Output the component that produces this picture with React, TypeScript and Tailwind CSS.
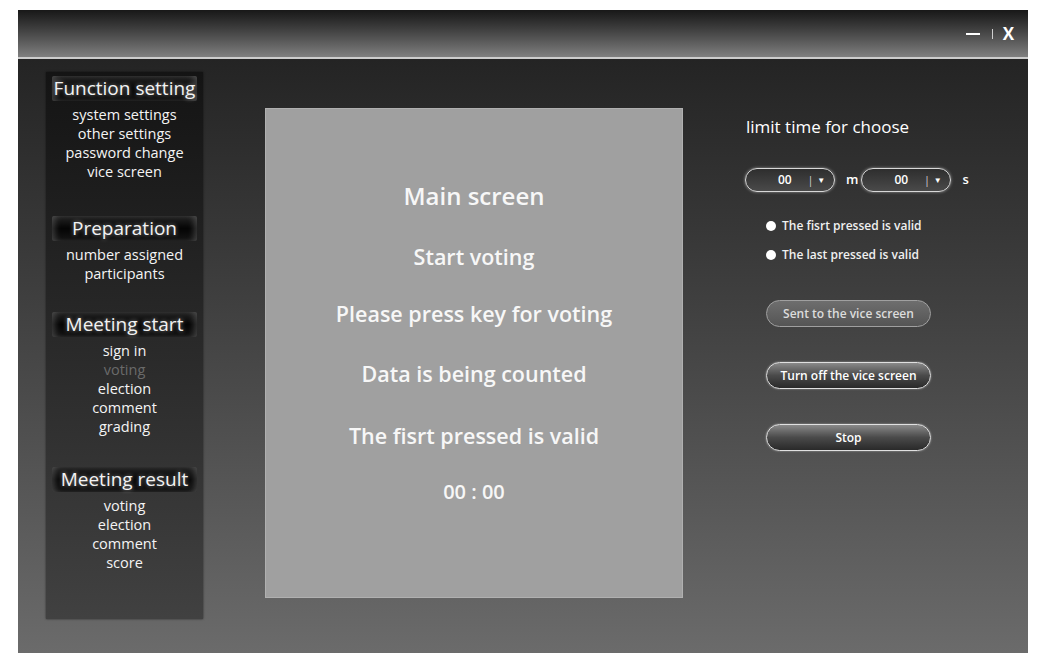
import React from 'react';

const FONT = "font-['Open_Sans','Noto_Sans',sans-serif]";

const SECTIONS: { title: string; items: { label: string; dim?: boolean }[]; gap: string }[] = [
  {
    title: 'Function setting',
    items: [{ label: 'system settings' }, { label: 'other settings' }, { label: 'password change' }, { label: 'vice screen' }],
    gap: 'mt-[4px]',
  },
  {
    title: 'Preparation',
    items: [{ label: 'number assigned' }, { label: 'participants' }],
    gap: 'mt-[35px]',
  },
  {
    title: 'Meeting start',
    items: [{ label: 'sign in' }, { label: 'voting', dim: true }, { label: 'election' }, { label: 'comment' }, { label: 'grading' }],
    gap: 'mt-[29px]',
  },
  {
    title: 'Meeting result',
    items: [{ label: 'voting' }, { label: 'election' }, { label: 'comment' }, { label: 'score' }],
    gap: 'mt-[31px]',
  },
];

const SCREEN_LINES = [
  { text: 'Main screen', cls: 'text-[24px] h-[30px]' },
  { text: 'Start voting', cls: 'text-[21.5px] h-[28px] mt-[31px]' },
  { text: 'Please press key for voting', cls: 'text-[21.5px] h-[28px] mt-[29px]' },
  { text: 'Data is being counted', cls: 'text-[21.5px] h-[28px] mt-[32px]' },
  { text: 'The fisrt pressed is valid', cls: 'text-[21.5px] h-[28px] mt-[34px]' },
  { text: '00 : 00', cls: 'text-[20px] h-[28px] mt-[28px]' },
];

function Sidebar() {
  return (
    <div className="w-[157px] h-[547px] mt-[13px] bg-linear-to-b from-[#141414] to-[#414141] shadow-[0_0_2px_rgba(0,0,0,0.6)] px-[6px] flex flex-col">
      {SECTIONS.map((s) => (
        <div key={s.title} className={s.gap}>
          <div className="h-[25px] rounded-[2px] bg-linear-to-b from-[#262626] via-[#050505] to-[#161616] shadow-[inset_6px_0_6px_-3px_rgba(120,120,120,0.45),inset_-6px_0_6px_-3px_rgba(120,120,120,0.45)] flex items-center justify-center">
            <span className="text-[19px] leading-none text-[#f2f2f2] [text-shadow:0_0_4px_rgba(255,255,255,0.55)] whitespace-nowrap">{s.title}</span>
          </div>
          <div className="mt-[4px] flex flex-col items-center">
            {s.items.map((it, i) => (
              <div
                key={i}
                className={`text-[14.5px] leading-[19px] whitespace-nowrap ${it.dim ? 'text-[#6a6a6a]' : 'text-[#f4f4f4]'}`}
              >
                {it.label}
              </div>
            ))}
          </div>
        </div>
      ))}
    </div>
  );
}

function PillSelect() {
  return (
    <div className="w-[90px] h-[24px] rounded-full border border-[#d8d8d8] bg-linear-to-b from-[#2e2e2e] to-[#4a4a4a] shadow-[0_0_3px_rgba(255,255,255,0.5)] flex items-center">
      <span className="ml-[32px] text-[12px] font-semibold text-white">00</span>
      <span className="ml-[16px] text-[10px] text-[#ddd]">|</span>
      <span className="ml-[4px] text-[8px] text-white">▼</span>
    </div>
  );
}

function GlossButton({ label, light }: { label: string; light?: boolean }) {
  return (
    <button
      className={`w-[165px] h-[27px] rounded-full border text-[12px] font-semibold ${
        light
          ? 'border-[#a0a0a0] bg-linear-to-b from-[#6e6e6e] to-[#555555] text-[#dcdcdc]'
          : 'border-[#e0e0e0] bg-linear-to-b from-[#8a8a8a] via-[#4a4a4a] to-[#2a2a2a] text-white shadow-[0_0_2px_rgba(255,255,255,0.5)]'
      }`}
    >
      {label}
    </button>
  );
}

function Radio({ label }: { label: string }) {
  return (
    <div className="flex items-center gap-[6px] h-[14px]">
      <span className="w-[10px] h-[10px] rounded-full bg-white" />
      <span className="text-[12px] font-semibold text-[#f0f0f0]">{label}</span>
    </div>
  );
}

export default function App() {
  return (
    <div className={`w-[1038px] h-[666px] bg-white pt-[10px] pl-[18px] ${FONT}`}>
      <div className="w-[1010px] h-[643px] flex flex-col overflow-hidden">
        {/* title bar */}
        <div className="h-[47px] bg-linear-to-b from-[#181818] to-[#808080] flex items-center justify-end pr-[14px] text-white">
          <span className="w-[14px] h-[2px] bg-white mt-[1px]" />
          <span className="ml-[12px] w-[1px] h-[10px] bg-[#cfcfcf]" />
          <span className="ml-[10px] text-[17px] font-bold leading-none">X</span>
        </div>
        <div className="h-[2px] bg-[#cdcdcd]" />

        {/* body */}
        <div className="flex-1 flex items-start pl-[28px] bg-linear-to-b from-[#242424] to-[#6b6b6b]">
          <Sidebar />

          <div className="ml-[62px] mt-[49px] w-[418px] h-[490px] bg-[#a0a0a0] border border-[#b0b0b0] flex flex-col items-center pt-[73px] text-[#f7f7f7] font-semibold">
            {SCREEN_LINES.map((l) => (
              <div key={l.text} className={`${l.cls} leading-[28px] whitespace-nowrap`}>
                {l.text}
              </div>
            ))}
          </div>

          <div className="ml-[62px] mt-[57px] flex flex-col text-white">
            <div className="text-[17px] leading-[21px] ml-[1px]">limit time for choose</div>
            <div className="mt-[31px] flex items-center">
              <PillSelect />
              <span className="ml-[11px] text-[13px] font-semibold">m</span>
              <span className="ml-[3px]">
                <PillSelect />
              </span>
              <span className="ml-[11px] text-[13px] font-semibold">s</span>
            </div>
            <div className="mt-[27px] ml-[21px] flex flex-col gap-[15px]">
              <Radio label="The fisrt pressed is valid" />
              <Radio label="The last pressed is valid" />
            </div>
            <div className="mt-[38px] ml-[21px] flex flex-col gap-[35px]">
              <GlossButton label="Sent to the vice screen" light />
              <GlossButton label="Turn off the vice screen" />
              <GlossButton label="Stop" />
            </div>
          </div>
        </div>
      </div>
    </div>
  );
}
